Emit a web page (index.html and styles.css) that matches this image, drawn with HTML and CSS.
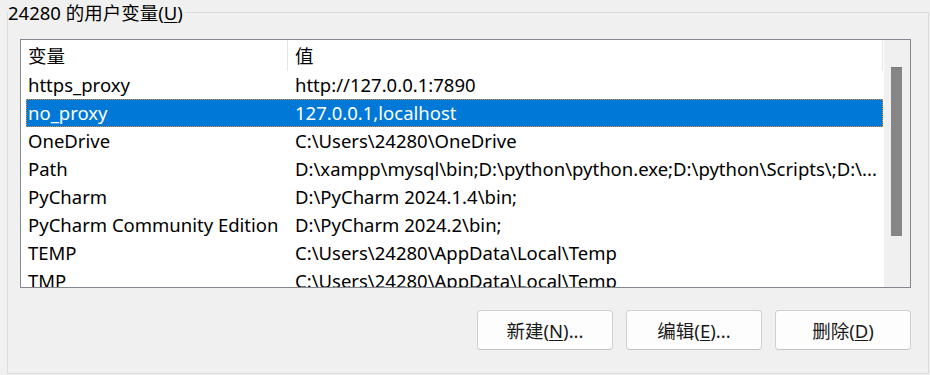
FILE: index.html
```html
<!DOCTYPE html>
<html lang="zh-CN">
<head>
    <meta charset="UTF-8">
    <meta name="viewport" content="width=device-width, initial-scale=1.0">
    <title>环境变量</title>
    <link rel="stylesheet" href="styles.css">
</head>
<body>
    <fieldset class="group">
        <legend class="group-title">24280 的用户变量(<u>U</u>)</legend>
        <div class="group-body">
            <div class="listview">
                <div class="list-main">
                    <div class="list-head">
                        <div class="cell col-name">变量</div>
                        <div class="cell col-value">值</div>
                    </div>
                    <div class="row">
                        <div class="cell col-name">https_proxy</div>
                        <div class="cell col-value">http://127.0.0.1:7890</div>
                    </div>
                    <div class="row selected">
                        <div class="cell col-name">no_proxy</div>
                        <div class="cell col-value">127.0.0.1,localhost</div>
                    </div>
                    <div class="row">
                        <div class="cell col-name">OneDrive</div>
                        <div class="cell col-value">C:\Users\24280\OneDrive</div>
                    </div>
                    <div class="row">
                        <div class="cell col-name">Path</div>
                        <div class="cell col-value">D:\xampp\mysql\bin;D:\python\python.exe;D:\python\Scripts\;D:\...</div>
                    </div>
                    <div class="row">
                        <div class="cell col-name">PyCharm</div>
                        <div class="cell col-value">D:\PyCharm 2024.1.4\bin;</div>
                    </div>
                    <div class="row">
                        <div class="cell col-name">PyCharm Community Edition</div>
                        <div class="cell col-value">D:\PyCharm 2024.2\bin;</div>
                    </div>
                    <div class="row">
                        <div class="cell col-name">TEMP</div>
                        <div class="cell col-value">C:\Users\24280\AppData\Local\Temp</div>
                    </div>
                    <div class="row">
                        <div class="cell col-name">TMP</div>
                        <div class="cell col-value">C:\Users\24280\AppData\Local\Temp</div>
                    </div>
                </div>
                <div class="scrollbar">
                    <div class="thumb"></div>
                </div>
            </div>

            <div class="actions">
                <button class="btn">新建(<u>N</u>)...</button>
                <button class="btn">编辑(<u>E</u>)...</button>
                <button class="btn">删除(<u>D</u>)</button>
            </div>
        </div>
    </fieldset>
</body>
</html>
```

FILE: styles.css
```css
body {
    margin: 0;
    background: #F0F0F0;
    color: #000000;
    font-family: "Noto Sans", "Noto Sans CJK SC", sans-serif;
    font-size: 18.5px;
}
.group {
    margin: 0 1px 0 7px;
    padding: 0;
    min-width: 0;
    border: 1px solid #DCDCDC;
}
.group-title {
    padding: 0 2px 0 0;
    line-height: 25px;
}
.group-title u,
.btn u {
    text-underline-offset: 2px;
}
.group-body {
    padding: 14px 17px 23px 12px;
}
.listview {
    display: flex;
    height: 247px;
    border: 1px solid #828790;
    background: #FFFFFF;
}
.list-main {
    flex: 1;
    overflow: hidden;
    padding-left: 5px;
}
.list-head,
.row {
    display: flex;
    width: 857px;
    white-space: nowrap;
}
.list-head {
    height: 31px;
    line-height: 31px;
}
.row {
    height: 28px;
    line-height: 28px;
}
.cell {
    overflow: hidden;
}
.col-name {
    width: 262px;
    flex: none;
    padding-left: 2px;
    box-sizing: border-box;
}
.col-value {
    flex: 1;
    padding-left: 7px;
    padding-right: 8px;
}
.list-head .col-name,
.list-head .col-value {
    border-right: 1px solid #E5E5E5;
}
.row.selected {
    background: #0078D7;
    color: #FFFFFF;
    outline: 1px dotted #F28C28;
    outline-offset: -1px;
}
.scrollbar {
    width: 26px;
    flex: none;
    background: #F0F0F0;
    padding: 27px 0 0 7px;
    box-sizing: border-box;
}
.thumb {
    width: 11px;
    height: 169px;
    background: #868686;
    border-top: 1px solid #7A7A7A;
    box-sizing: border-box;
}
.actions {
    display: flex;
    justify-content: flex-end;
    gap: 13px;
    margin-top: 22px;
}
.btn {
    width: 136px;
    height: 40px;
    background: #FDFDFD;
    border: 1px solid #D0D0D0;
    border-bottom-color: #C4C4C4;
    border-radius: 4px;
    font-family: inherit;
    font-size: 18.5px;
    color: #1A1A1A;
    padding: 0;
}
```
